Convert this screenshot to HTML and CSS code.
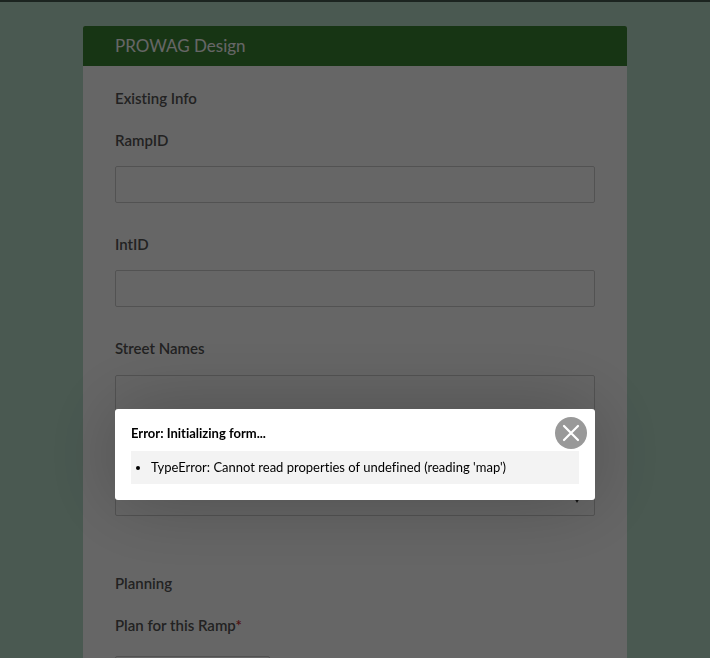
FILE: index.html
```html
<!DOCTYPE html>
<html lang="en">
<head>
    <meta charset="UTF-8">
    <meta name="viewport" content="width=device-width, initial-scale=1.0">
    <title>PROWAG Design</title>
    <link rel="stylesheet" href="styles.css">
</head>
<body>
    <form class="survey">
        <h1 class="survey-title">PROWAG Design</h1>
        <div class="survey-body">
            <h2 class="group-title">Existing Info</h2>
            <div class="question">
                <label for="rampId">RampID</label>
                <input type="text" id="rampId" name="rampId">
            </div>
            <div class="question">
                <label for="intId">IntID</label>
                <input type="text" id="intId" name="intId">
            </div>
            <div class="question">
                <label for="streetNames">Street Names</label>
                <div class="text-wrap">
                    <textarea id="streetNames" name="streetNames"></textarea>
                    <svg class="pin" viewBox="0 0 12 16" aria-hidden="true">
                        <path d="M6 16 L2 9 A5 5 0 1 1 10 9 Z"/>
                    </svg>
                </div>
            </div>
            <h2 class="group-title planning">Planning</h2>
            <div class="question">
                <label for="plan">Plan for this Ramp<span class="required">*</span></label>
                <select id="plan" name="plan" required>
                    <option value=""></option>
                </select>
            </div>
        </div>
    </form>

    <div class="overlay">
        <div class="dialog" role="alertdialog" aria-labelledby="errorTitle">
            <h3 class="dialog-title" id="errorTitle">Error: Initializing form...</h3>
            <ul class="error-list">
                <li>TypeError: Cannot read properties of undefined (reading 'map')</li>
            </ul>
            <button type="button" class="close" aria-label="Close">
                <svg viewBox="0 0 32 32">
                    <path d="M9 9 L23 23 M23 9 L9 23"/>
                </svg>
            </button>
        </div>
    </div>
</body>
</html>
```
FILE: styles.css
```css
* {
    box-sizing: border-box;
}
html {
    height: 100%;
    overflow: hidden;
}
body {
    margin: 0;
    padding: 24px 32px;
    height: 100%;
    overflow: hidden;
    background-color: #b9decb;
    border-top: 2px solid #465a50;
    font-family: Lato, "Liberation Sans", sans-serif;
    font-size: 15px;
    line-height: 20px;
    font-variant-ligatures: none;
    color: #555;
}
.survey {
    max-width: 544px;
    margin: 0 auto;
    background-color: #fff;
    border-radius: 2px;
}
.survey-title {
    margin: 0;
    padding: 10px 32px;
    background-color: #3a8532;
    border-radius: 2px 2px 0 0;
    color: #fff;
    font-size: 17px;
    font-weight: normal;
}
.survey-body {
    padding: 22px 32px;
}
.group-title {
    margin: 0 0 22px;
    font-size: 15px;
    font-weight: 600;
}
.planning {
    margin-top: 57px;
}
.question {
    margin-bottom: 31px;
}
.question label {
    display: block;
    margin-bottom: 16px;
    font-weight: 600;
}
.question input,
.question textarea,
.question select {
    display: block;
    width: 100%;
    height: 37px;
    padding: 8px;
    background-color: #fff;
    border: 1px solid #cdcdcd;
    border-radius: 2px;
    font: inherit;
    color: inherit;
}
.question textarea {
    height: 141px;
    resize: none;
}
.question select {
    width: 155px;
    margin-top: 21px;
    appearance: none;
}
.text-wrap {
    position: relative;
    margin-top: 17px;
}
.pin {
    position: absolute;
    right: 12px;
    bottom: 13px;
    width: 12px;
    height: 16px;
    fill: #333;
}
.required {
    color: #c62828;
}
.overlay {
    position: fixed;
    inset: 0;
    display: flex;
    justify-content: center;
    align-items: flex-start;
    padding: 409px 64px 0;
    background-color: rgba(0, 0, 0, 0.6);
}
.dialog {
    position: relative;
    width: 100%;
    max-width: 480px;
    padding: 16px;
    background-color: #fff;
    border-radius: 3px;
    box-shadow: 0 0 80px rgba(0, 0, 0, 0.25);
    color: #000;
    font-size: 13px;
}
.dialog-title {
    margin: 0 0 10px;
    font-size: 13px;
    font-weight: bold;
    line-height: 16px;
}
.error-list {
    margin: 0;
    padding: 6px 8px 7px 20px;
    background-color: #f3f3f3;
}
.close {
    position: absolute;
    top: 8px;
    right: 8px;
    width: 32px;
    height: 32px;
    padding: 0;
    border: none;
    border-radius: 50%;
    background-color: #999;
    cursor: pointer;
}
.close svg {
    display: block;
    fill: none;
    stroke: #fff;
    stroke-width: 2.2;
    stroke-linecap: round;
}
```
